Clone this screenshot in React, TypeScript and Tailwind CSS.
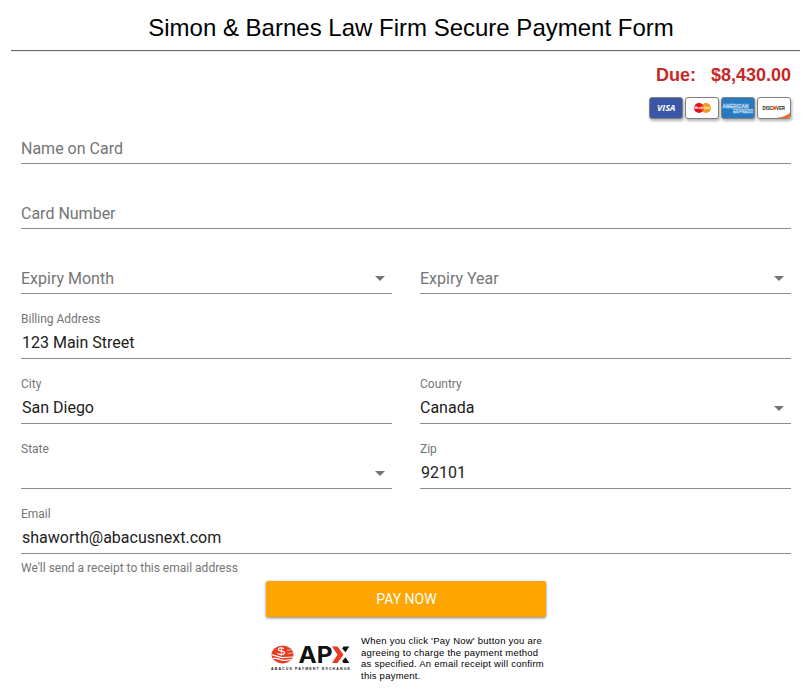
import React from 'react';

const cardBox = 'h-[22px] w-[34px] rounded-[3px] border border-[#808080] overflow-hidden shadow-[1px_2px_3px_rgba(0,0,0,0.3)]';

function CardLogos() {
  return (
    <div className="flex gap-0.5">
      <div className={`${cardBox} bg-[#3a57a7]`}>
        <svg width="32" height="20" viewBox="0 0 32 20">
          <text x="7" y="13" fontFamily="Open Sans, sans-serif" fontSize="8" fontWeight="700" fontStyle="italic" fill="#fff" textLength="18.500" lengthAdjust="spacingAndGlyphs">VISA</text>
          <path d="M6.800 7.200H9L9.800 10Z" fill="#f0b35a" />
        </svg>
      </div>
      <div className={`${cardBox} bg-white`}>
        <svg width="32" height="20" viewBox="0 0 32 20">
          <circle cx="13" cy="10" r="5" fill="#e2131b" />
          <circle cx="20" cy="10" r="5" fill="#f59a1e" />
          <path d="M16.500 6.400a5 5 0 0 1 0 7.200a5 5 0 0 1 0-7.200" fill="#ea4b1c" />
          <text x="8.500" y="11.300" fontFamily="Liberation Sans, sans-serif" fontSize="3.800" fontWeight="700" fontStyle="italic" fill="#fff" textLength="15.500" lengthAdjust="spacingAndGlyphs">MasterCard</text>
        </svg>
      </div>
      <div className={`${cardBox} bg-[#267ac0]`}>
        <svg width="32" height="20" viewBox="0 0 32 20">
          <g fontFamily="Liberation Sans, sans-serif" fontSize="6" fontWeight="700" fill="#267ac0" stroke="#c4def2" strokeWidth="0.500">
            <text x="0.500" y="9.500" textLength="26" lengthAdjust="spacingAndGlyphs">AMERICAN</text>
            <text x="11" y="14.500" textLength="20" lengthAdjust="spacingAndGlyphs">EXPRESS</text>
          </g>
        </svg>
      </div>
      <div className={`${cardBox} bg-white`}>
        <svg width="32" height="20" viewBox="0 0 32 20">
          <path d="M32 14.800C29 17.500 25 19.200 18.500 20H32Z" fill="#f26b21" />
          <g fontFamily="Liberation Sans, sans-serif" fontSize="5.300" fontWeight="700" fill="#222">
            <text x="4.500" y="12" textLength="10.500" lengthAdjust="spacingAndGlyphs">DISC</text>
            <text x="18" y="12" textLength="9" lengthAdjust="spacingAndGlyphs">VER</text>
          </g>
          <circle cx="16.500" cy="10.100" r="2" fill="#f26b21" />
        </svg>
      </div>
    </div>
  );
}

function ApxLogo() {
  return (
    <svg width="82" height="34" viewBox="0 -4 82 34" className="block shrink-0">
      <ellipse cx="12.500" cy="11.500" rx="11" ry="9" fill="#ec3b24" />
      <g fill="none" stroke="#fff" strokeWidth="1.200">
        <path d="M14 5.500C11 4.300 8 4.800 8.300 6.600S14.500 7.500 14.500 9.800S10 11.800 7.500 10.500" />
        <path d="M11.300 3.500V13" strokeWidth="0.800" />
        <path d="M1.800 11.800C6 12 9 15.300 14 14.500L23 14" />
        <path d="M3 15.500C8 14.500 11 18 15 17.300L21.500 16.500" />
        <path d="M17 7.500L21.500 6.500M17.500 10.800L23 9.800" strokeWidth="0.600" />
      </g>
      <text x="28.500" y="20" fontFamily="Inter, sans-serif" fontSize="22.500" fontWeight="700" fill="#111" textLength="34" lengthAdjust="spacingAndGlyphs">AP</text>
      <path d="M62 3.500H67.500L73.500 11.700L67.500 20H62L67.500 11.700Z" fill="#ec3b24" />
      <path d="M73.500 3.500H79.300L75.500 9.300L72.200 5.500ZM75.500 14.200L79.300 20H73.500L72.200 18Z" fill="#111" />
      <text x="1" y="27" fontFamily="Liberation Sans, sans-serif" fontSize="3.600" fontWeight="700" fill="#222" textLength="79">ABACUS PAYMENT EXCHANGE</text>
    </svg>
  );
}

type FieldProps = {
  label: string;
  value?: string;
  // keeps the label floated above the line even when nothing is selected
  floating?: boolean;
  select?: boolean;
  first?: boolean;
};

function Field({ label, value, floating, select, first }: FieldProps) {
  const raised = floating || value !== undefined;
  return (
    <div className={`flex flex-1 flex-col justify-end border-b border-[#8c8c8c] pb-[5px] ${first ? 'h-[45px]' : 'h-[65px]'}`}>
      {raised && <label className="text-xs leading-4 text-[#757575]">{label}</label>}
      <div className={`flex h-5 items-center justify-between ${raised ? 'mt-1.5' : ''}`}>
        {raised ? (
          <span className={`text-base leading-5 text-[#212121] ${select ? '' : 'pl-px'}`}>{value}</span>
        ) : (
          <label className="pt-0.5 text-base leading-5 text-[#757575]">{label}</label>
        )}
        {select && (
          <svg width="10" height="5" viewBox="0 0 10 5" className="mr-[7px]">
            <path d="M0 0H10L5 5Z" fill="#757575" />
          </svg>
        )}
      </div>
    </div>
  );
}

export default function App() {
  return (
    <div className="min-h-[695px] bg-white font-['Roboto',sans-serif]">
      <header className="mr-3 ml-[11px] flex h-[51px] justify-center border-b border-[#666666] pt-3 pl-[11px] shadow-[0_1px_0_#eeeeee]">
        <h1 className="font-['Liberation_Sans',Arial,sans-serif] text-2xl leading-8 text-black">
          Simon &amp; Barnes Law Firm Secure Payment Form
        </h1>
      </header>

      <main className="mx-[21px]">
        <div className="flex flex-col items-end pt-3.5">
          <div className="flex h-5 gap-[15px] font-['Liberation_Sans',Arial,sans-serif] text-lg leading-5 font-bold text-[#c62828]">
            <span>Due:</span>
            <span>$8,430.00</span>
          </div>
          <div className="mt-3">
            <CardLogos />
          </div>
        </div>

        <form>
          <div className="flex">
            <Field label="Name on Card" first />
          </div>
          <div className="flex">
            <Field label="Card Number" />
          </div>
          <div className="flex gap-7">
            <Field label="Expiry Month" select />
            <Field label="Expiry Year" select />
          </div>
          <div className="flex">
            <Field label="Billing Address" value="123 Main Street" />
          </div>
          <div className="flex gap-7">
            <Field label="City" value="San Diego" />
            <Field label="Country" value="Canada" select />
          </div>
          <div className="flex gap-7">
            <Field label="State" floating select />
            <Field label="Zip" value="92101" />
          </div>
          <div className="flex">
            <Field label="Email" value="shaworth@abacusnext.com" />
          </div>
          <p className="mt-1.5 text-xs leading-4 text-[#757575]">We'll send a receipt to this email address</p>
          <div className="mt-[5px] flex justify-center">
            <button
              type="button"
              className="h-9 w-[280px] rounded-[2px] bg-[#ffa500] pl-px text-sm text-white shadow-[0_1px_3px_rgba(0,0,0,0.5)]"
            >
              PAY NOW
            </button>
          </div>
        </form>

        <footer className="mt-[18px] ml-[249px] flex">
          <div className="mt-1">
            <ApxLogo />
          </div>
          <p className="ml-[9px] w-[200px] font-['Liberation_Sans',Arial,sans-serif] text-[9.5px] leading-[11.7px] tracking-[0.24px] text-black">
            When you click 'Pay Now' button you are<br />
            agreeing to charge the payment method<br />
            as specified. An email receipt will confirm<br />
            this payment.
          </p>
        </footer>
      </main>
    </div>
  );
}
